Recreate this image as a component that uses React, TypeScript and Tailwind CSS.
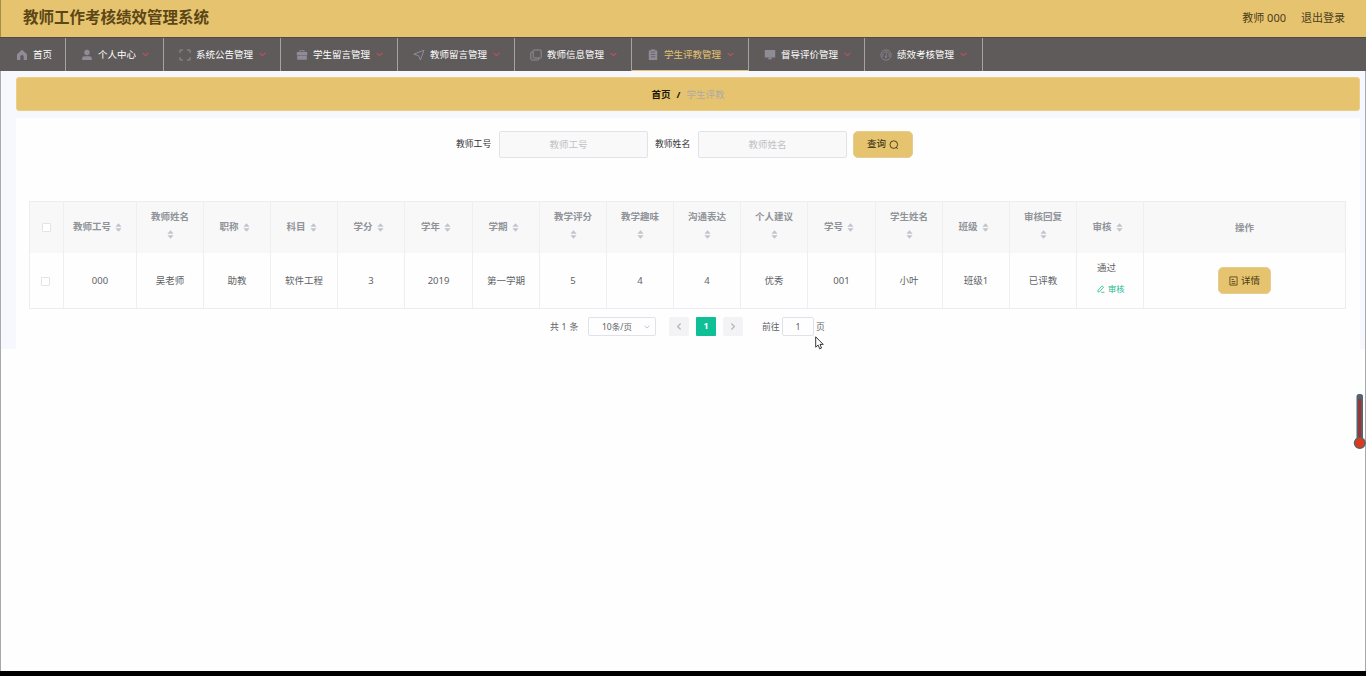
import React from 'react';
import clsx from 'clsx';

interface NavItem {
  label: string;
  width: string;
  icon: React.ReactNode;
  active?: boolean;
  noArrow?: boolean;
}

interface Column {
  label: string;
  value: string;
  width: string;
  wrap?: boolean;
}

const strokeProps = {
  fill: 'none',
  stroke: 'currentColor',
  strokeWidth: 1,
};

const HomeIcon = () => (
  <svg viewBox="0 0 12 12" className="h-3 w-3" fill="currentColor">
    <path d="M6 .8 1 5.2V11h3.3V7.6a1.7 1.7 0 0 1 3.4 0V11H11V5.2Z" />
  </svg>
);

const UserIcon = () => (
  <svg viewBox="0 0 12 12" className="h-3 w-3" fill="currentColor">
    <circle cx="6" cy="3.5" r="2.7" />
    <path d="M1.2 10.9V9.3Q1.2 7.2 3.4 7.2h5.2q2.2 0 2.2 2.1v1.6Z" />
  </svg>
);

const FullScreenIcon = () => (
  <svg viewBox="0 0 12 12" className="h-3 w-3" {...strokeProps}>
    <path d="M1 4V1h3M8 1h3v3M11 8v3H8M4 11H1V8" />
  </svg>
);

const BriefcaseIcon = () => (
  <svg viewBox="0 0 12 12" className="h-3 w-3" fill="currentColor">
    <path d="M3.5 3V1.2h5V3h2.7v3.6H.8V3Zm1 0h3v-.9h-3ZM1.2 7.1h9.6v3.7H1.2Z" />
  </svg>
);

const PositionIcon = () => (
  <svg viewBox="0 0 12 12" className="h-3 w-3" {...strokeProps}>
    <path d="M.8 5.2 11 1.2 7.4 11 5.6 6.7Z" />
  </svg>
);

const CopyIcon = () => (
  <svg viewBox="0 0 12 12" className="h-3 w-3" {...strokeProps}>
    <rect x="3.2" y="1" width="8" height="8" rx=".8" />
    <path d="M3 3H1.8a1 1 0 0 0-1 1v6a1 1 0 0 0 1 1h6a1 1 0 0 0 1-1V9" />
  </svg>
);

const ClipboardIcon = () => (
  <svg viewBox="0 0 12 12" className="h-3 w-3">
    <path fill="currentColor" d="M1.8 1.6h2V.6h4.4v1h2V11H1.8Z" />
    <path stroke="#5f5b5b" strokeWidth=".8" d="M3.8 3h4.4M3.8 5.5h4.4M3.8 7.8h4.4" />
  </svg>
);

const MonitorIcon = () => (
  <svg viewBox="0 0 12 12" className="h-3 w-3" fill="currentColor">
    <path d="M.8 1h10.4v7.4H.8ZM4.6 8.8h2.8l.6 1.4H4Z" />
  </svg>
);

const GaugeIcon = () => (
  <svg viewBox="0 0 12 12" className="h-3 w-3" {...strokeProps} strokeWidth={0.8}>
    <circle cx="6" cy="6" r="5.1" />
    <path d="M3.2 7.8A3.2 3.2 0 0 1 6 2.9a3.2 3.2 0 0 1 2.8 4.9M6.5 4.6 6 7.4" />
    <circle cx="6" cy="8.1" r=".7" />
  </svg>
);

const Chevron = ({ className }: { className?: string }) => (
  <svg viewBox="0 0 6 4" className={clsx('shrink-0', className)} {...strokeProps}>
    <path d="m.6.7 2.4 2.4L5.4.7" />
  </svg>
);

const navItems: NavItem[] = [
  { label: '首页', width: 'w-[65px]', icon: <HomeIcon />, noArrow: true },
  { label: '个人中心', width: 'w-[98px]', icon: <UserIcon /> },
  { label: '系统公告管理', width: 'w-[117px]', icon: <FullScreenIcon /> },
  { label: '学生留言管理', width: 'w-[117px]', icon: <BriefcaseIcon /> },
  { label: '教师留言管理', width: 'w-[117px]', icon: <PositionIcon /> },
  { label: '教师信息管理', width: 'w-[117px]', icon: <CopyIcon /> },
  { label: '学生评教管理', width: 'w-[117px]', icon: <ClipboardIcon />, active: true },
  { label: '督导评价管理', width: 'w-[116px]', icon: <MonitorIcon /> },
  { label: '绩效考核管理', width: 'w-[118px]', icon: <GaugeIcon /> },
];

const columns: Column[] = [
  { label: '教师工号', value: '000', width: 'w-[73px]' },
  { label: '教师姓名', value: '吴老师', width: 'w-[67px]', wrap: true },
  { label: '职称', value: '助教', width: 'w-[67px]' },
  { label: '科目', value: '软件工程', width: 'w-[67px]' },
  { label: '学分', value: '3', width: 'w-[67px]' },
  { label: '学年', value: '2019', width: 'w-[68px]' },
  { label: '学期', value: '第一学期', width: 'w-[67px]' },
  { label: '教学评分', value: '5', width: 'w-[67px]', wrap: true },
  { label: '教学趣味', value: '4', width: 'w-[67px]', wrap: true },
  { label: '沟通表达', value: '4', width: 'w-[67px]', wrap: true },
  { label: '个人建议', value: '优秀', width: 'w-[67px]', wrap: true },
  { label: '学号', value: '001', width: 'w-[68px]' },
  { label: '学生姓名', value: '小叶', width: 'w-[67px]', wrap: true },
  { label: '班级', value: '班级1', width: 'w-[67px]' },
  { label: '审核回复', value: '已评教', width: 'w-[67px]', wrap: true },
];

const SortCaret = () => (
  <svg viewBox="0 0 7 9" className="h-[9px] w-[7px] shrink-0" fill="#c0c4cc">
    <path d="M3.5.3 6.6 3.7H.4ZM3.5 8.7.4 5.3h6.2Z" />
  </svg>
);

const HeaderCell = ({ label, width, wrap }: { label: string; width: string; wrap?: boolean }) => (
  <div
    className={clsx(
      'flex shrink-0 items-center border-r border-[#eeeff3]',
      width,
      wrap ? 'flex-col gap-1.5 pt-2' : 'justify-center gap-1 pb-px pr-[5px]'
    )}
  >
    <span className="leading-[14px]">{label}</span>
    <SortCaret />
  </div>
);

const Checkbox = () => (
  <span className="h-[9px] w-[9px] rounded-[1px] border border-[#e2e4e9] bg-white" />
);

const SearchField = ({ label }: { label: string }) => (
  <label className="flex items-center">
    <span className="w-[43px] pt-px text-[8.8px] text-[#303133]">{label}</span>
    <input
      placeholder={label}
      className="h-[27px] w-[149px] rounded-[2px] border border-[#e2e3e7] bg-[#f9f9f9] pb-px pr-2.5 text-center text-[9.5px] placeholder-[#bfc1c6] focus:outline-none"
    />
  </label>
);

const Thermometer = () => (
  <svg viewBox="0 0 13 57" className="absolute left-[1353px] top-[393px] h-[57px] w-[13px]">
    <rect x="3.5" y="1" width="6.5" height="46.5" rx="2.5" fill="#536471" />
    <rect x="5.2" y="6" width="3" height="39" fill="#a03234" />
    <circle cx="6.8" cy="50" r="5.4" fill="#dc3a1d" stroke="#536471" strokeWidth="1.3" />
  </svg>
);

const Cursor = () => (
  <svg viewBox="0 0 9 14" className="absolute left-[815px] top-[336px] h-[14px] w-[9px]">
    <path
      d="M.7.8v10.4l2.4-2.1 1.6 3.7 1.8-.8L5 8.4h3.2Z"
      fill="#fff"
      stroke="#222"
      strokeWidth=".9"
    />
  </svg>
);

const App = () => {
  return (
    <div className="relative flex h-[676px] w-[1366px] flex-col overflow-hidden bg-black font-['Noto_Sans','Noto_Sans_CJK_SC',sans-serif] text-[9.5px] text-[#606266]">
      <header className="flex h-[37px] shrink-0 items-center justify-between border-l border-[#a58d50] bg-[#e6c46f] pb-px pl-[22px] pr-[21px]">
        <h1 className="text-[15.5px] font-bold text-[#5c4716]">教师工作考核绩效管理系统</h1>
        <div className="flex gap-[15px] text-[11px] text-[#4b3d1c]">
          <span>教师 000</span>
          <span>退出登录</span>
        </div>
      </header>

      <nav className="flex h-[34px] shrink-0 border-t border-[#54484a] bg-[#5f5b5b] pl-px">
        {navItems.map((item) => (
          <div
            key={item.label}
            className={clsx(
              'flex shrink-0 items-center border-r border-[#a5a2a4] pl-[15px]',
              item.width,
              item.active
                ? 'border-b border-b-[#e6c46f] pt-px text-[#e6c46f]'
                : 'text-white'
            )}
          >
            <span className="mr-[5px] text-[#8f8c98]">{item.icon}</span>
            <span className="whitespace-nowrap pt-[2px]">{item.label}</span>
            {!item.noArrow && <Chevron className="ml-1.5 h-[5px] w-[7px] text-[#b4535c]" />}
          </div>
        ))}
      </nav>

      <div className="flex h-[600px] shrink-0 flex-col border-x border-[#a9a9ac] bg-[#fefefe]">
        <main className="flex h-[278px] shrink-0 flex-col bg-[#f7f8fd] pl-[15px] pr-[5px] pt-1.5">
          <div className="flex h-[34px] shrink-0 items-center justify-center rounded-[3px] border border-[#eccf87] bg-[#e6c46f] pt-0.5">
            <span className="font-bold text-[#1d1608]">首页</span>
            <span className="mx-1.5 font-bold text-[#1d1608]">/</span>
            <span className="text-[#aeaaa3]">学生评教</span>
          </div>

          <section className="mt-[7px] flex flex-1 flex-col bg-[#fefefe] pl-[13px] pr-[14px] pt-[13px]">
            <div className="flex h-[27px] shrink-0 items-center pl-[427px]">
              <SearchField label="教师工号" />
              <div className="ml-[7px] mr-1.5 flex">
                <SearchField label="教师姓名" />
              </div>
              <button className="flex h-[27px] w-[60px] items-center justify-center gap-[3px] rounded-[5px] border border-[#e5cd92] bg-[#e6c46f] text-[#2d230c]">
                <span>查询</span>
                <svg viewBox="0 0 10 10" className="h-2.5 w-2.5" {...strokeProps} strokeWidth={0.8}>
                  <circle cx="4.8" cy="4.6" r="3.8" />
                  <path d="m7.3 7.4 1.4 1.6" />
                </svg>
              </button>
            </div>

            <div className="mt-[43px] flex h-[108px] shrink-0 flex-col border border-[#ebedf1]">
              <div className="flex h-[51px] shrink-0 bg-[#f8f8f8] font-bold text-[#909399]">
                <div className="flex w-[34px] shrink-0 items-center justify-center border-r border-[#eeeff3]">
                  <Checkbox />
                </div>
                {columns.map((col) => (
                  <HeaderCell key={col.label} label={col.label} width={col.width} wrap={col.wrap} />
                ))}
                <HeaderCell label="审核" width="w-[67px]" />
                <div className="flex flex-1 items-center justify-center pt-0.5">操作</div>
              </div>

              <div className="flex flex-1">
                <div className="flex w-[34px] shrink-0 items-center justify-center border-r border-[#eeeff3] pr-0.5 pt-0.5">
                  <Checkbox />
                </div>
                {columns.map((col) => (
                  <div
                    key={col.label}
                    className={clsx(
                      'flex shrink-0 items-center justify-center border-r border-[#eeeff3] pt-0.5',
                      col.width
                    )}
                  >
                    {col.value}
                  </div>
                ))}
                <div className="flex w-[67px] shrink-0 flex-col border-r border-[#eeeff3] pl-5 pt-2">
                  <span className="leading-[14px]">通过</span>
                  <button className="mt-[7px] flex items-center gap-[3px] text-[8.2px] leading-[14px] text-[#22b98f]">
                    <svg viewBox="0 0 8 8" className="h-2 w-2" {...strokeProps} strokeWidth={0.8}>
                      <path d="M1 5.4 5 .8l1.6 1.3-4 4.6L1 7ZM4.2 7.3h3.3" />
                    </svg>
                    审核
                  </button>
                </div>
                <div className="flex flex-1 items-center justify-center">
                  <button className="flex h-[27px] w-[53px] items-center justify-center gap-[3px] rounded-[5px] border border-[#e5cd92] bg-[#e6c46f] text-[#4a3a14]">
                    <svg viewBox="0 0 9 10" className="h-2.5 w-[9px]" {...strokeProps} strokeWidth={0.8}>
                      <path d="M.9.9h7.2v8.2H.9ZM2.6 3.5h2.2M2.6 5.5h3.8M2.6 7.3h3.8" />
                    </svg>
                    <span className="pt-px">详情</span>
                  </button>
                </div>
              </div>
            </div>

            <div className="mt-2 flex h-[19px] shrink-0 items-center pl-[521px] text-[8.8px]">
              <span className="w-[38px] whitespace-nowrap pt-0.5 [word-spacing:0.5px]">共 1 条</span>
              <div className="flex h-[19px] w-[68px] items-center justify-between rounded-[2px] border border-[#dfe2e8] pl-[13px] pr-[5px]">
                <span className="pt-0.5 text-[8.5px]">10条/页</span>
                <Chevron className="h-1 w-1.5 text-[#c0c4cc]" />
              </div>
              <span className="ml-[13px] flex h-[19px] w-5 items-center justify-center rounded-[2px] bg-[#f3f3f5] text-[#b4b7bd]">
                <Chevron className="h-[5px] w-2 rotate-90" />
              </span>
              <span className="ml-[7px] flex h-[19px] w-5 items-center justify-center rounded-[1px] bg-[#0fbf95] pt-px font-bold text-white">
                1
              </span>
              <span className="ml-[7px] flex h-[19px] w-5 items-center justify-center rounded-[2px] bg-[#f3f3f5] text-[#b4b7bd]">
                <Chevron className="h-[5px] w-2 -rotate-90" />
              </span>
              <span className="ml-[19px] w-5 whitespace-nowrap pt-0.5">前往</span>
              <span className="flex h-[19px] w-8 items-center justify-center rounded-[2px] border border-[#dfe2e8] pt-0.5">
                1
              </span>
              <span className="ml-0.5 pt-0.5">页</span>
            </div>
          </section>
        </main>
      </div>

      <Thermometer />
      <Cursor />
    </div>
  );
};

export default App;
